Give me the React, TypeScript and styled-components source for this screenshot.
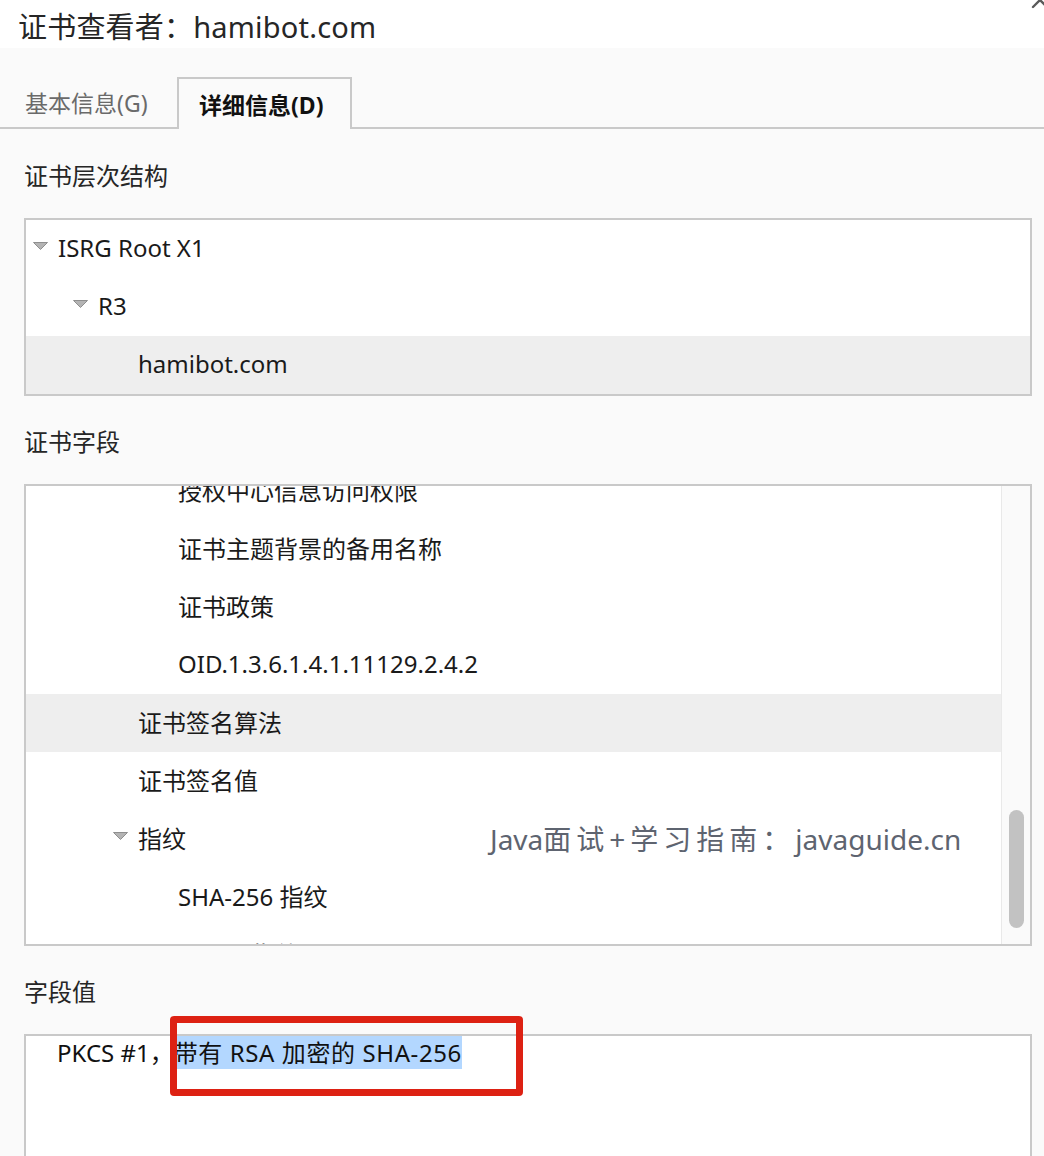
import React from "react";
import styled, { createGlobalStyle } from "styled-components";

const GlobalStyle = createGlobalStyle`
  html, body {
    margin: 0;
    padding: 0;
    background: #fafafa;
  }
  body {
    font-family: "Noto Sans", "Noto Sans CJK SC", sans-serif;
    color: #1e1e1e;
  }
`;

const Window = styled.div`
  width: 1044px;
  height: 1156px;
  overflow: hidden;
  display: flex;
  flex-direction: column;
  background: #fafafa;
`;

const TitleBar = styled.div`
  position: relative;
  height: 48px;
  flex: none;
  background: #ffffff;
  display: flex;
  align-items: center;
  padding: 2px 0 0 18px;
  box-sizing: border-box;
  font-size: 29px;
  letter-spacing: 0.2px;
  color: #262626;
  white-space: nowrap;
`;

const CloseMark = styled.svg`
  position: absolute;
  top: -10px;
  right: -6px;
  width: 20px;
  height: 20px;
`;

const TabBar = styled.div`
  height: 81px;
  flex: none;
  box-sizing: border-box;
  border-bottom: 2px solid #c9c9c9;
  display: flex;
  align-items: flex-end;
`;

const Tab = styled.div<{ $active?: boolean }>`
  box-sizing: border-box;
  height: 52px;
  margin-bottom: -2px;
  display: flex;
  align-items: center;
  font-size: 23px;
  white-space: nowrap;
  ${(p) =>
    p.$active
      ? `
    width: 175px;
    padding: 0 0 0 20px;
    border: 2px solid #c9c9c9;
    border-bottom: none;
    background: #fafafa;
    color: #111111;
    font-weight: 700;
  `
      : `
    width: 177px;
    padding: 0 0 2px 25px;
    color: #6a6a6a;
  `}
`;

const Content = styled.div`
  flex: 1;
  display: flex;
  flex-direction: column;
  padding: 0 12px 0 24px;
`;

const Section = styled.section<{ $first?: boolean; $grow?: boolean }>`
  position: relative;
  display: flex;
  flex-direction: column;
  margin-top: ${(p) => (p.$first ? 31 : 30)}px;
  ${(p) => (p.$grow ? "flex: 1;" : "")}
`;

const Label = styled.div`
  font-size: 24px;
  line-height: 32px;
  height: 34px;
  color: #262626;
  margin-bottom: 24px;
  white-space: nowrap;
`;

const Box = styled.div`
  box-sizing: border-box;
  border: 2px solid #c9c9c9;
  background: #ffffff;
`;

const TreeBox = styled(Box)`
  display: flex;
  flex-direction: column;
`;

const FieldsBox = styled(Box)`
  position: relative;
  height: 462px;
  display: grid;
  grid-template-columns: 1fr 29px;
`;

const Viewport = styled.div`
  overflow: hidden;
`;

const FieldList = styled.div`
  display: flex;
  flex-direction: column;
  margin-top: -24px;
`;

const Row = styled.div<{ $level: number; $selected?: boolean }>`
  box-sizing: border-box;
  height: 58px;
  flex: none;
  display: flex;
  align-items: center;
  padding-left: ${(p) => 7 + 40 * p.$level}px;
  padding-bottom: 3px;
  background: ${(p) => (p.$selected ? "#eeeeee" : "transparent")};
  font-size: 24px;
  color: #1a1a1a;
  white-space: nowrap;
`;

const Disclosure = styled.span`
  width: 25px;
  flex: none;
  display: flex;
  align-items: center;
  margin-top: -3px;
`;

const Track = styled.div`
  border-left: 1px solid #e9e9e9;
  background: #fafafa;
  display: flex;
  flex-direction: column;
  align-items: center;
  padding: 324px 0 0 0;
`;

const Thumb = styled.div`
  width: 15px;
  height: 118px;
  border-radius: 8px;
  background: #c2c2c2;
  margin-left: 1px;
`;

const Watermark = styled.div`
  position: absolute;
  left: 464px;
  top: 336px;
  font-size: 28px;
  line-height: 34px;
  color: #5e6470;
  white-space: nowrap;
`;

const Wide = styled.span`
  letter-spacing: 5px;
`;

const ValueBox = styled(Box)`
  flex: 1;
  border-bottom: none;
  padding: 0 0 0 31px;
  font-size: 24px;
  line-height: 34px;
  color: #111111;
  white-space: nowrap;
`;

const Selection = styled.span`
  background: #b3d7ff;
  letter-spacing: 0.6px;
`;

const Annotation = styled.div`
  position: absolute;
  left: 146px;
  top: 40px;
  width: 353px;
  height: 80px;
  box-sizing: border-box;
  border: 7px solid #dd2113;
  border-radius: 4px;
`;

const Triangle = () => (
  <svg width="15" height="8" viewBox="0 0 15 8">
    <path d="M0.5 0.5 L14.5 0.5 L7.5 7.5 Z" fill="#b4b4b4" stroke="#8f8f8f" strokeWidth="1" strokeLinejoin="round" />
  </svg>
);

type Item = { label: string; level: number; selected?: boolean; open?: boolean };

const hierarchy: Item[] = [
  { label: "ISRG Root X1", level: 0, open: true },
  { label: "R3", level: 1, open: true },
  { label: "hamibot.com", level: 2, selected: true },
];

const fields: Item[] = [
  { label: "授权中心信息访问权限", level: 3 },
  { label: "证书主题背景的备用名称", level: 3 },
  { label: "证书政策", level: 3 },
  { label: "OID.1.3.6.1.4.1.11129.2.4.2", level: 3 },
  { label: "证书签名算法", level: 2, selected: true },
  { label: "证书签名值", level: 2 },
  { label: "指纹", level: 2, open: true },
  { label: "SHA-256 指纹", level: 3 },
  { label: "SHA-1 指纹", level: 3 },
];

const TreeRow = ({ item }: { item: Item }) => (
  <Row $level={item.level} $selected={item.selected}>
    <Disclosure>{item.open ? <Triangle /> : null}</Disclosure>
    {item.label}
  </Row>
);

export default function App() {
  return (
    <>
      <GlobalStyle />
      <Window>
        <TitleBar>
          证书查看者：hamibot.com
          <CloseMark viewBox="0 0 20 20">
            <path d="M3 3 L17 17 M17 3 L3 17" stroke="#5a5a5a" strokeWidth="2.4" strokeLinecap="round" />
          </CloseMark>
        </TitleBar>
        <TabBar>
          <Tab>基本信息(G)</Tab>
          <Tab $active>详细信息(D)</Tab>
        </TabBar>
        <Content>
          <Section $first>
            <Label>证书层次结构</Label>
            <TreeBox>
              {hierarchy.map((item) => (
                <TreeRow key={item.label} item={item} />
              ))}
            </TreeBox>
          </Section>
          <Section>
            <Label>证书字段</Label>
            <FieldsBox>
              <Viewport>
                <FieldList>
                  {fields.map((item) => (
                    <TreeRow key={item.label} item={item} />
                  ))}
                </FieldList>
              </Viewport>
              <Track>
                <Thumb />
              </Track>
              <Watermark>
                Java<Wide>面试+学习指南：</Wide>javaguide.cn
              </Watermark>
            </FieldsBox>
          </Section>
          <Section $grow>
            <Label>字段值</Label>
            <ValueBox>
              PKCS #1，<Selection>带有 RSA 加密的 SHA-256</Selection>
            </ValueBox>
            <Annotation />
          </Section>
        </Content>
      </Window>
    </>
  );
}
